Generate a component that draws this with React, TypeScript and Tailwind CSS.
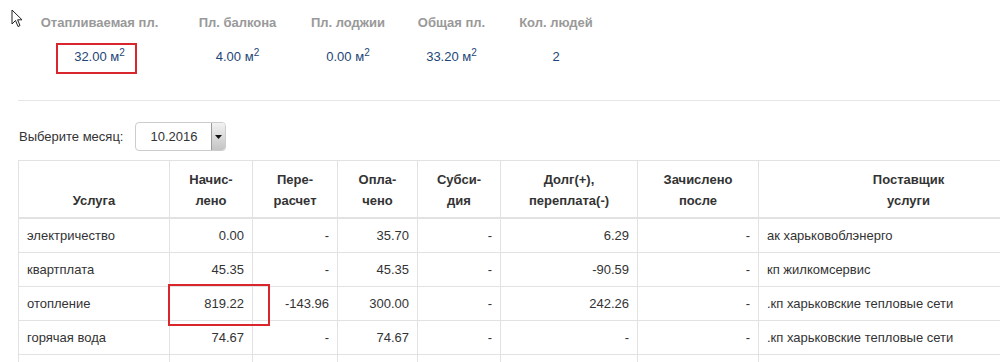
import React from "react";

const stats = [
  { label: "Отапливаемая пл.", value: "32.00", unit: true, w: "w-[139px]" },
  { label: "Пл. балкона", value: "4.00", unit: true, w: "w-[137px]" },
  { label: "Пл. лоджии", value: "0.00", unit: true, w: "w-[84px]" },
  { label: "Общая пл.", value: "33.20", unit: true, w: "w-[123px]" },
  { label: "Кол. людей", value: "2", unit: false, w: "w-[86px]" },
];

const rows = [
  ["электричество", "0.00", "-", "35.70", "-", "6.29", "-", "ак харьковоблэнерго"],
  ["квартплата", "45.35", "-", "45.35", "-", "-90.59", "-", "кп жилкомсервис"],
  ["отопление", "819.22", "-143.96", "300.00", "-", "242.26", "-", ".кп харьковские тепловые сети"],
  ["горячая вода", "74.67", "-", "74.67", "-", "-", "-", ".кп харьковские тепловые сети"],
  ["", "", "", "", "", "", "", ""],
];

const headers: string[][] = [
  ["Услуга"],
  ["Начис-", "лено"],
  ["Пере-", "расчет"],
  ["Опла-", "чено"],
  ["Субси-", "дия"],
  ["Долг(+),", "переплата(-)"],
  ["Зачислено", "после"],
  ["Поставщик", "услуги"],
];

const colW = ["w-[151px]", "w-[83px]", "w-[85px]", "w-[80px]", "w-[83px]", "w-[137px]", "w-[121px]", "w-[300px]"];

export default function App() {
  return (
    <div
      className="relative w-[1000px] h-[362px] overflow-hidden bg-white text-[13px] text-[#333]"
      style={{ fontFamily: '"Liberation Sans", Arial, sans-serif' }}
    >
      {/* cursor */}
      <svg className="absolute left-[11px] top-[9px]" width="12" height="19" viewBox="0 0 12 19">
        <path d="M1 1 L1 15 L4.5 11.5 L7 17.5 L9 16.6 L6.6 10.8 L11 10.8 Z" fill="#fff" stroke="#222" strokeWidth="1" strokeLinejoin="round" />
      </svg>

      {/* stats */}
      <div className="ml-[30px] pt-[14px] flex">
        {stats.map((s, i) => (
          <div key={i} className={`${s.w} shrink-0 flex flex-col items-center`}>
            <div className="font-bold text-[#999] leading-[18px] whitespace-nowrap">{s.label}</div>
            <div className="relative mt-[16px] leading-[18px] text-[#1d4677] whitespace-nowrap">
              {s.value}
              {s.unit && (
                <>
                  {" "}м<sup className="text-[10px]">2</sup>
                </>
              )}
              {i === 0 && (
                <div className="absolute left-[-18px] top-[-5px] w-[81px] h-[31px] border-2 border-[#d9262c]" />
              )}
            </div>
          </div>
        ))}
      </div>

      <div className="ml-[18px] mt-[34px] border-t border-[#e6e6e6]" />

      {/* month select */}
      <div className="flex items-center mt-[21px] ml-[19px]">
        <span className="leading-[18px]">Выберите месяц:</span>
        <div className="ml-[12px] w-[91px] h-[29px] flex border border-[#ccc] rounded-[4px] overflow-hidden bg-white">
          <div className="flex-1 flex items-center pl-[14px]">10.2016</div>
          <div className="w-[14px] flex items-center justify-center bg-gradient-to-b from-[#f2f2f2] to-[#c4c4c4] border-l border-[#9a9a9a]">
            <svg width="7" height="4" viewBox="0 0 7 4">
              <path d="M0 0 H7 L3.5 4 Z" fill="#111" />
            </svg>
          </div>
        </div>
      </div>

      {/* table */}
      <div className="relative ml-[18px] mt-[9px]">
        <table className="table-fixed border-collapse w-[1040px]">
          <colgroup>
            {colW.map((w, i) => (
              <col key={i} className={w} />
            ))}
          </colgroup>
          <thead>
            <tr>
              {headers.map((h, i) => (
                <th
                  key={i}
                  className="align-bottom text-center font-bold border border-[#e2e2e2] border-b-2 pt-[8px] pb-[6px] px-2 leading-[21px]"
                >
                  {h.map((l, j) => (
                    <div key={j}>{l}</div>
                  ))}
                </th>
              ))}
            </tr>
          </thead>
          <tbody>
            {rows.map((r, ri) => (
              <tr key={ri}>
                {r.map((c, ci) => (
                  <td
                    key={ci}
                    className={`border border-[#e2e2e2] py-2 px-2 h-[34px] leading-[17px] whitespace-nowrap ${
                      ci === 0 || ci === 7 ? "text-left" : "text-right"
                    }`}
                  >
                    {c}
                  </td>
                ))}
              </tr>
            ))}
          </tbody>
        </table>
        <div className="absolute left-[150px] top-[124px] w-[102px] h-[42px] border-2 border-[#d9262c]" />
      </div>
    </div>
  );
}
